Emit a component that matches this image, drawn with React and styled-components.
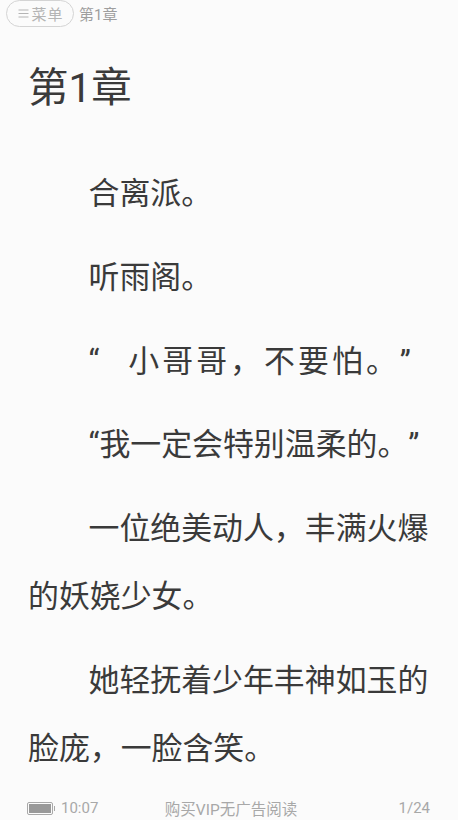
import React from 'react'
import styled, { createGlobalStyle } from 'styled-components'

const GlobalStyle = createGlobalStyle`
  html, body {
    margin: 0;
    padding: 0;
    background: #fbfbfb;
  }
  body {
    font-family: Roboto, "Noto Sans CJK SC", sans-serif;
    text-spacing-trim: space-all;
  }
`

const paragraphs = [
  { lines: ['合离派。'] },
  { lines: ['听雨阁。'] },
  { lines: ['“  小哥哥，不要怕。”'], spacing: 3.05, wordSpacing: 2.2 },
  { lines: ['“我一定会特别温柔的。”'] },
  { lines: ['一位绝美动人，丰满火爆', '的妖娆少女。'] },
  { lines: ['她轻抚着少年丰神如玉的', '脸庞，一脸含笑。'] },
]

export default function App() {
  return (
    <Page>
      <GlobalStyle />
      <TopBar>
        <MenuButton>
          <MenuIcon viewBox="0 0 11 9">
            <path d="M0.5 1H10.5M0.5 4.5H10.5M0.5 8H10.5" />
          </MenuIcon>
          菜单
        </MenuButton>
        <TopTitle>第1章</TopTitle>
      </TopBar>
      <ChapterTitle>第1章</ChapterTitle>
      <Content>
        {paragraphs.map((p, i) => (
          <Paragraph key={i}>
            {p.lines.map((line, j) => (
              <Line key={j} $first={j === 0} $spacing={p.spacing} $wordSpacing={p.wordSpacing}>{line}</Line>
            ))}
          </Paragraph>
        ))}
      </Content>
      <Footer>
        <FooterLeft>
          <Battery>
            <BatteryFill />
          </Battery>
          <span>10:07</span>
        </FooterLeft>
        <FooterCenter>购买VIP无广告阅读</FooterCenter>
        <FooterRight>1/24</FooterRight>
      </Footer>
    </Page>
  )
}

const Page = styled.div`
  width: 458px;
  height: 820px;
  overflow: hidden;
  display: flex;
  flex-direction: column;
  background: #fbfbfb;
`
const TopBar = styled.div`
  display: flex;
  align-items: center;
  height: 27px;
  padding-left: 6px;
  gap: 5px;
`
const MenuButton = styled.div`
  box-sizing: border-box;
  width: 68px;
  height: 27px;
  padding-left: 2px;
  border: 1px solid #d4d4d4;
  border-radius: 14px;
  display: flex;
  align-items: center;
  justify-content: center;
  gap: 2px;
  font-size: 15px;
  color: #b4b4b4;
  letter-spacing: 1px;
`
const MenuIcon = styled.svg`
  width: 11px;
  height: 9px;
  fill: none;
  stroke: #b4b4b4;
  stroke-width: 1;
`
const TopTitle = styled.div`
  font-size: 15px;
  color: #9e9e9e;
`
const ChapterTitle = styled.h1`
  margin: 32px 0 0 28px;
  height: 58px;
  font-size: 40.5px;
  line-height: 58px;
  font-weight: 400;
  color: #3a3a3a;
`
const Content = styled.div`
  padding: 43px 0 0 28px;
  flex: 1;
  min-height: 0;
  color: #3a3a3a;
  font-size: 30.9px;
`
const Paragraph = styled.div`
  margin-bottom: 15.8px;
`
const Line = styled.div`
  height: 68px;
  line-height: 68px;
  white-space: pre;
  padding-left: ${p => (p.$first ? '60.5px' : '0')};
  letter-spacing: ${p => (p.$spacing ? `${p.$spacing}px` : 'normal')};
  word-spacing: ${p => (p.$wordSpacing ? `${p.$wordSpacing}px` : 'normal')};
`
const Footer = styled.div`
  flex: none;
  height: 24px;
  display: grid;
  grid-template-columns: 1fr auto 1fr;
  align-items: center;
  font-size: 15.5px;
  color: #a8a8a8;
`
const FooterLeft = styled.div`
  display: flex;
  align-items: center;
  gap: 8px;
  padding-left: 27px;
  font-size: 15px;
`
const Battery = styled.div`
  position: relative;
  box-sizing: border-box;
  width: 26px;
  height: 13px;
  border: 1px solid #a8a8a8;
  border-radius: 2px;
  padding: 1px;
  &::after {
    content: '';
    position: absolute;
    right: -3px;
    top: 3px;
    width: 1px;
    height: 5px;
    background: #a8a8a8;
  }
`
const BatteryFill = styled.div`
  height: 100%;
  background: #999;
`
const FooterCenter = styled.div`
  text-align: center;
  padding-left: 4px;
`
const FooterRight = styled.div`
  text-align: right;
  padding-right: 28px;
  font-size: 15px;
`
